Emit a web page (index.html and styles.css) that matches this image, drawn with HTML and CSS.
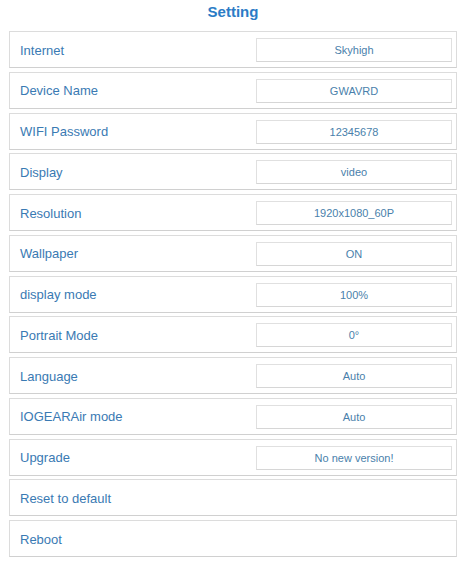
FILE: index.html
```html
<!DOCTYPE html>
<html lang="en">
<head>
  <meta charset="UTF-8" />
  <meta name="viewport" content="width=device-width,initial-scale=1.0" />
  <title>Setting</title>
  <link rel="stylesheet" href="styles.css">
</head>
<body>

  <div class="container">

    <h1 class="title">Setting</h1>

    <ul class="setting_list">
      <li class="item">
        <span class="label">Internet</span>
        <span class="value">Skyhigh</span>
      </li>
      <li class="item">
        <span class="label">Device Name</span>
        <span class="value">GWAVRD</span>
      </li>
      <li class="item">
        <span class="label">WIFI Password</span>
        <span class="value">12345678</span>
      </li>
      <li class="item">
        <span class="label">Display</span>
        <span class="value">video</span>
      </li>
      <li class="item">
        <span class="label">Resolution</span>
        <span class="value">1920x1080_60P</span>
      </li>
      <li class="item">
        <span class="label">Wallpaper</span>
        <span class="value">ON</span>
      </li>
      <li class="item">
        <span class="label">display mode</span>
        <span class="value">100%</span>
      </li>
      <li class="item">
        <span class="label">Portrait Mode</span>
        <span class="value">0°</span>
      </li>
      <li class="item">
        <span class="label">Language</span>
        <span class="value">Auto</span>
      </li>
      <li class="item">
        <span class="label">IOGEARAir mode</span>
        <span class="value">Auto</span>
      </li>
      <li class="item">
        <span class="label">Upgrade</span>
        <span class="value">No new version!</span>
      </li>
      <li class="item">
        <span class="label">Reset to default</span>
      </li>
      <li class="item">
        <span class="label">Reboot</span>
      </li>
    </ul>

  </div>

</body>
</html>
```

FILE: styles.css
```css
body {
  margin: 0;
  padding: 0;
  background: #fff;
  font-family: "Liberation Sans", Arial, sans-serif;
}

.container {
  width: 448px;
  padding: 0 13px 0 9px;
}

/* ========================== */
/* タイトル */
/* ========================== */

.title {
  margin: 0;
  height: 31px;
  line-height: 24px;
  text-align: center;
  font-size: 15px;
  font-weight: bold;
  color: #2b7cc6;
}

/* ========================== */
/* 設定項目 */
/* ========================== */

.setting_list {
  list-style: none;
  margin: 0;
  padding: 0;
  display: flex;
  flex-direction: column;
  gap: 3.75px;
}

.setting_list .item {
  box-sizing: border-box;
  height: 37px;
  display: flex;
  align-items: center;
  justify-content: space-between;
  padding: 1px 4px 0 10px;
  border: 1px solid #dcdcdc;
  border-bottom-color: #d0d0d0;
}

.setting_list .label {
  font-size: 13px;
  color: #3a7ab3;
}

.setting_list .value {
  box-sizing: border-box;
  width: 196px;
  height: 24px;
  line-height: 22px;
  text-align: center;
  font-size: 11px;
  color: #4a7fab;
  border: 1px solid #e0e0e0;
  border-bottom-color: #d6d6d6;
}
```
